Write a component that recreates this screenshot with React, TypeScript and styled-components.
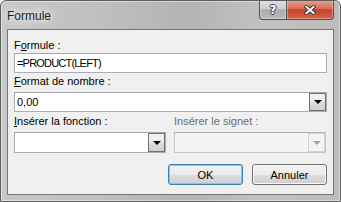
import styled, { createGlobalStyle } from "styled-components";

const GlobalStyle = createGlobalStyle`
  html, body {
    margin: 0;
    padding: 0;
    width: 341px;
    height: 202px;
    overflow: hidden;
    background: #ffffff;
  }
`;

const Window = styled.div`
  width: 341px;
  height: 202px;
  box-sizing: border-box;
  display: flex;
  flex-direction: column;
  border: 1px solid #5e5e5e;
  border-radius: 6px 6px 0 0;
  box-shadow: inset 0 0 0 1px rgba(255, 255, 255, 0.45);
  background: linear-gradient(90deg, #c8c8c8 0%, #bfbfbf 30%, #b3b3b3 55%, #c2c2c2 78%, #bbbbbb 100%);
  font-family: "Liberation Sans", Arial, sans-serif;
  overflow: hidden;
`;

const TitleBar = styled.div`
  height: 28px;
  display: flex;
  align-items: flex-start;
`;

const Title = styled.div`
  margin: 8px 0 0 6px;
  font-size: 12px;
  line-height: 15px;
  color: #1e1e1e;
  text-shadow: 0 0 6px rgba(255, 255, 255, 0.95), 0 0 12px rgba(255, 255, 255, 0.9),
    0 0 18px rgba(255, 255, 255, 0.8);
`;

const CaptionButtons = styled.div`
  margin: -1px 6px 0 auto;
  display: flex;
`;

const CaptionButton = styled.div<{ $kind: "help" | "close" }>`
  box-sizing: border-box;
  width: ${(p) => (p.$kind === "help" ? 28 : 47)}px;
  height: 20px;
  display: flex;
  align-items: center;
  justify-content: center;
  border: 1px solid #505050;
  border-top: none;
  border-left-width: ${(p) => (p.$kind === "help" ? 1 : 0)}px;
  border-radius: ${(p) => (p.$kind === "help" ? "0 0 0 4px" : "0 0 4px 0")};
  box-shadow: inset 0 0 0 1px rgba(255, 255, 255, 0.35);
  background: ${(p) =>
    p.$kind === "help"
      ? "linear-gradient(180deg, #e2e2e2 0%, #cdcdcd 45%, #acacac 52%, #b9b9b9 100%)"
      : "linear-gradient(180deg, #eaa594 0%, #d86d55 45%, #c43f28 52%, #d2664b 100%)"};
`;

const HelpGlyph = styled.span`
  font-family: "DejaVu Sans", sans-serif;
  font-weight: bold;
  font-size: 12px;
  line-height: 12px;
  color: #ffffff;
  margin-top: 1px;
  text-shadow: -1px 0 #3c3c3c, 1px 0 #3c3c3c, 0 -1px #3c3c3c, 0 1px #3c3c3c;
`;

const Client = styled.div`
  flex: 1;
  margin: 0 6px 6px 6px;
  border: 1px solid #767676;
  background: #f0f0f0;
  padding: 9px 6px 9px 6px;
  display: flex;
  flex-direction: column;
  font-size: 11px;
  color: #000000;
`;

const Label = styled.div<{ $top: number; $bottom?: number; $disabled?: boolean }>`
  height: 13px;
  line-height: 13px;
  margin-top: ${(p) => p.$top}px;
  margin-bottom: ${(p) => p.$bottom ?? 4}px;
  white-space: nowrap;
  color: ${(p) => (p.$disabled ? "#6d6d6d" : "#000000")};
`;

const Key = styled.span`
  text-decoration: underline;
`;

const Field = styled.div<{ $height: number; $disabled?: boolean }>`
  box-sizing: border-box;
  height: ${(p) => p.$height}px;
  display: flex;
  align-items: stretch;
  border: 1px solid ${(p) => (p.$disabled ? "#c2c5c8" : "#abadb3")};
  border-top-color: ${(p) => (p.$disabled ? "#adb2b5" : "#a3a6ad")};
  background: ${(p) => (p.$disabled ? "#f4f4f4" : "#ffffff")};
`;

const FieldText = styled.div<{ $narrow?: boolean }>`
  flex: 1;
  padding-left: 2px;
  line-height: 18px;
  white-space: nowrap;
  letter-spacing: ${(p) => (p.$narrow ? "-0.8px" : "0")};
`;

const DropButton = styled.div<{ $disabled?: boolean }>`
  box-sizing: border-box;
  width: 17px;
  display: flex;
  align-items: center;
  justify-content: center;
  border: 1px solid ${(p) => (p.$disabled ? "#d3d3d3" : "#707070")};
  background: ${(p) =>
    p.$disabled
      ? "#f4f4f4"
      : "linear-gradient(180deg, #f2f2f2 0%, #ebebeb 50%, #dddddd 51%, #cfcfcf 100%)"};
`;

const Arrow = styled.div<{ $disabled?: boolean }>`
  width: 0;
  height: 0;
  border-left: 4px solid transparent;
  border-right: 4px solid transparent;
  border-top: 4px solid ${(p) => (p.$disabled ? "#a6a6a6" : "#000000")};
`;

const Columns = styled.div`
  display: grid;
  grid-template-columns: 152px 152px;
  column-gap: 8px;
`;

const Column = styled.div`
  display: flex;
  flex-direction: column;
`;

const ButtonRow = styled.div`
  margin-top: 11px;
  display: flex;
  justify-content: flex-end;
  gap: 9px;
`;

const Button = styled.div<{ $focused?: boolean }>`
  box-sizing: border-box;
  width: 75px;
  height: 21px;
  display: flex;
  align-items: center;
  justify-content: center;
  border: 1px solid ${(p) => (p.$focused ? "#3c7fb1" : "#707070")};
  border-radius: 3px;
  box-shadow: ${(p) => (p.$focused ? "inset 0 0 0 1px #6fd3f7" : "inset 0 0 0 1px #fbfbfb")};
  background: linear-gradient(180deg, #f2f2f2 0%, #ebebeb 50%, #dddddd 51%, #cfcfcf 100%);
  font-size: 11px;
`;

function CloseGlyph() {
  return (
    <svg width="12" height="10" viewBox="0 0 12 10">
      <path d="M2.5 2 L9.5 8 M9.5 2 L2.5 8" stroke="#3a3a3a" strokeWidth="4" strokeLinecap="square" fill="none" />
      <path d="M2.5 2 L9.5 8 M9.5 2 L2.5 8" stroke="#ffffff" strokeWidth="2" strokeLinecap="square" fill="none" />
    </svg>
  );
}

function Combo({ text, height, disabled }: { text?: string; height: number; disabled?: boolean }) {
  return (
    <Field $height={height} $disabled={disabled}>
      <FieldText>{text}</FieldText>
      <DropButton $disabled={disabled}>
        <Arrow $disabled={disabled} />
      </DropButton>
    </Field>
  );
}

export default function App() {
  return (
    <Window>
      <GlobalStyle />
      <TitleBar>
        <Title>Formule</Title>
        <CaptionButtons>
          <CaptionButton $kind="help">
            <HelpGlyph>?</HelpGlyph>
          </CaptionButton>
          <CaptionButton $kind="close">
            <CloseGlyph />
          </CaptionButton>
        </CaptionButtons>
      </TitleBar>
      <Client>
        <Label $top={0} $bottom={1}>
          F<Key>o</Key>rmule :
        </Label>
        <Field $height={20}>
          <FieldText $narrow>=PRODUCT(LEFT)</FieldText>
        </Field>
        <Label $top={2}>
          <Key>F</Key>ormat de nombre :
        </Label>
        <Combo text="0,00" height={20} />
        <Columns>
          <Column>
            <Label $top={3}>
              <Key>I</Key>nsérer la fonction :
            </Label>
            <Combo height={21} />
          </Column>
          <Column>
            <Label $top={3} $disabled>
              Insérer le signet :
            </Label>
            <Combo height={21} disabled />
          </Column>
        </Columns>
        <ButtonRow>
          <Button $focused>OK</Button>
          <Button>Annuler</Button>
        </ButtonRow>
      </Client>
    </Window>
  );
}
